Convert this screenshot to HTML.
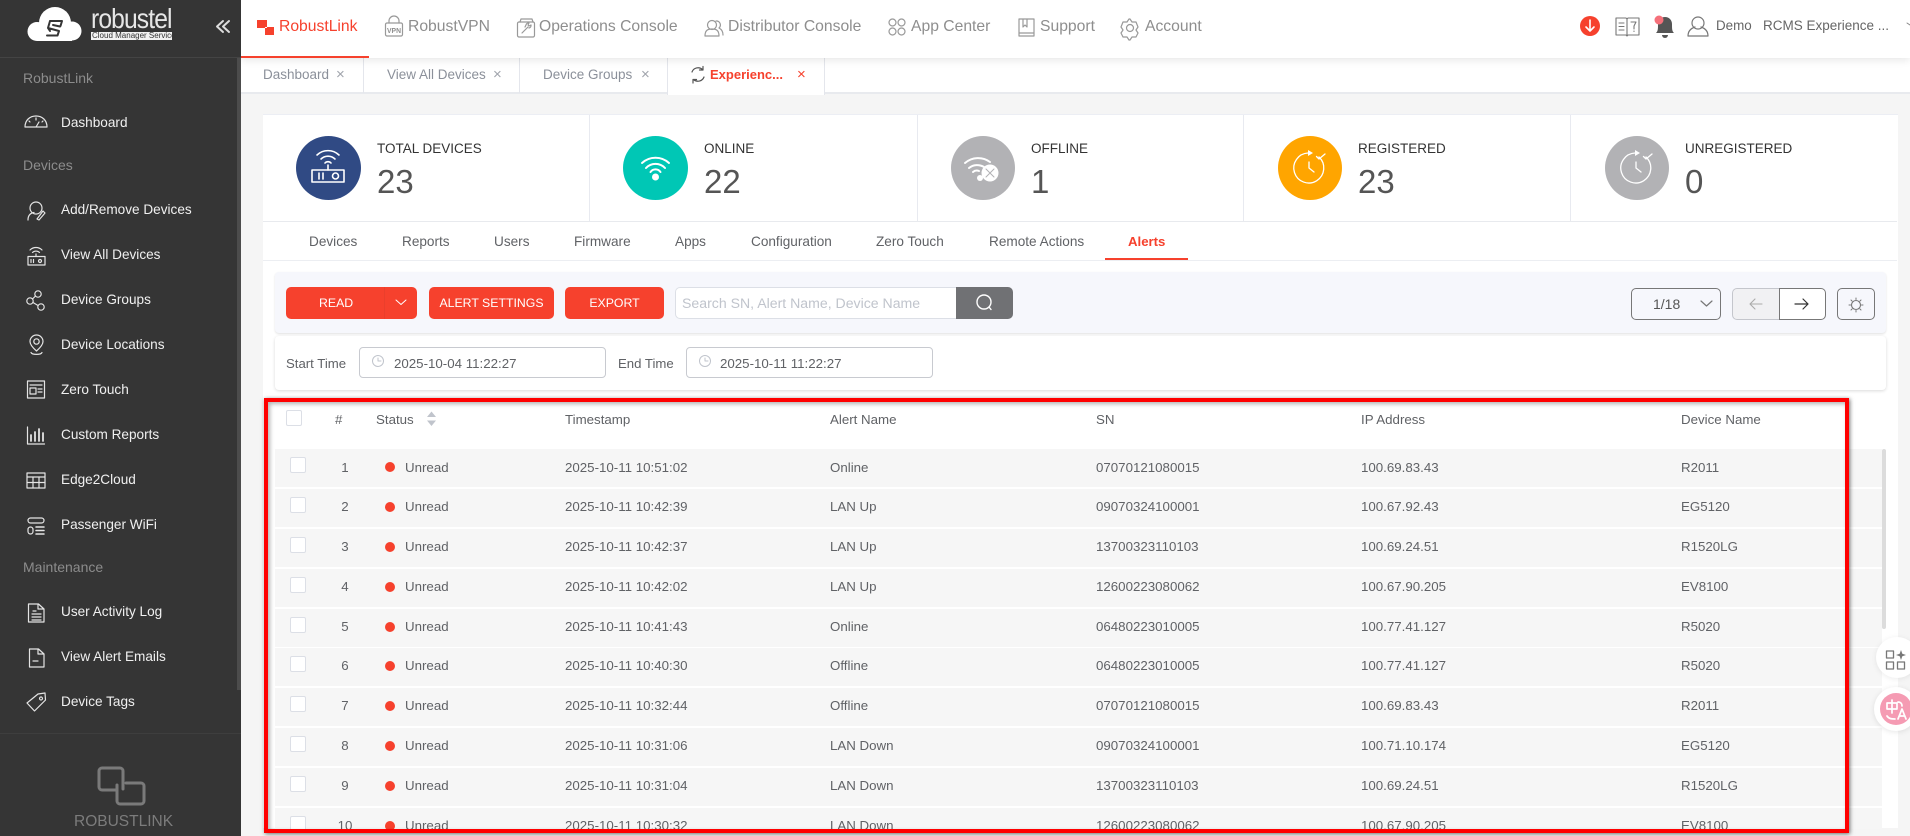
<!DOCTYPE html>
<html><head><meta charset="utf-8"><style>
html,body{margin:0;padding:0;width:1910px;height:836px;overflow:hidden;background:#f5f5f5;font-family:"Liberation Sans",sans-serif;color:#606266}
.t{position:absolute;white-space:nowrap;line-height:20px;height:20px}
.b{position:absolute;box-sizing:border-box}
.side{color:#f0f0f0;font-size:13.6px;left:61px;margin-top:1px}
.sec{color:#8c8c8c;font-size:14px;left:23px}
.nav{font-size:15.7px;color:#8e8e8e;top:17px}
.tab{font-size:13.5px;color:#8b909a;top:65px}
.x{font-size:15px;color:#a0a4ac;top:65px}
.lab{font-size:13.5px;color:#333;top:139px}
.num{font-size:33px;color:#555;top:172px;height:20px}
.sub{font-size:13.6px;color:#606266;top:232px}
.btn{position:absolute;background:#f6412d;color:#fff;font-size:12.3px;text-align:center;line-height:32px;height:32px;top:287px;border-radius:5px}
.th{font-size:13.3px;top:410px}
.tbl{position:absolute;left:0;top:402px;width:1910px;height:427px;overflow:hidden}
.r{position:absolute;left:275px;width:1607px;height:38px;background:#f6f6f6;font-size:13.3px}
.r i{position:absolute;left:15px;top:8px;width:14px;height:14px;border:1px solid #dcdfe6;background:#fff;border-radius:2px}
.r b{position:absolute;left:110px;top:13px;width:10px;height:10px;border-radius:50%;background:#f6412d}
.r span{position:absolute;top:8px;line-height:20px;white-space:nowrap}
.n{left:60px;width:20px;text-align:center}.u{left:130px}.s{left:290px}.a{left:555px}.c{left:821px}.p{left:1086px}.d{left:1406px}
</style></head><body>

<!-- main surfaces -->
<div class="b" style="left:241px;top:58px;width:1669px;height:36px;background:#fff;border-bottom:2px solid #e8eaee"></div>
<div class="b" style="left:667px;top:58px;width:158px;height:37px;background:#fff;border-left:1px solid #e4e6ec;border-right:1px solid #e4e6ec"></div>
<div class="b" style="left:363px;top:58px;width:1px;height:35px;background:#e4e6ec"></div>
<div class="b" style="left:519px;top:58px;width:1px;height:35px;background:#e4e6ec"></div>
<div class="b" style="left:263px;top:114px;width:1635px;height:714px;background:#fff;border-top:1px solid #eceef4"></div>
<div class="b" style="left:263px;top:221px;width:1634px;height:1px;background:#e8eaee"></div>
<div class="b" style="left:263px;top:260px;width:1634px;height:1px;background:#eceef2"></div>
<div class="b" style="left:589px;top:115px;width:1px;height:106px;background:#e8eaf0"></div>
<div class="b" style="left:917px;top:115px;width:1px;height:106px;background:#e8eaf0"></div>
<div class="b" style="left:1243px;top:115px;width:1px;height:106px;background:#e8eaf0"></div>
<div class="b" style="left:1570px;top:115px;width:1px;height:106px;background:#e8eaf0"></div>
<div class="b" style="left:1105px;top:258px;width:83px;height:2px;background:#f6412d"></div>

<!-- header -->
<div class="b" style="left:241px;top:0;width:1669px;height:58px;background:#fff;box-shadow:0 2px 8px rgba(0,0,0,.1)"></div>
<div class="b" style="left:241px;top:56px;width:128px;height:2px;background:#f6412d"></div>
<div class="t nav" style="left:279px;color:#f6412d">RobustLink</div>
<div class="t nav" style="left:408px">RobustVPN</div>
<div class="t nav" style="left:539px">Operations Console</div>
<div class="t nav" style="left:728px">Distributor Console</div>
<div class="t nav" style="left:911px">App Center</div>
<div class="t nav" style="left:1040px">Support</div>
<div class="t nav" style="left:1145px">Account</div>
<div class="t" style="left:1716px;top:16px;font-size:13.4px;color:#666">Demo</div>
<div class="t" style="left:1763px;top:16px;font-size:13.5px;color:#666">RCMS Experience ...</div>

<!-- tabs -->
<div class="t tab" style="left:263px">Dashboard</div><div class="t x" style="left:336px">×</div>
<div class="t tab" style="left:387px">View All Devices</div><div class="t x" style="left:493px">×</div>
<div class="t tab" style="left:543px">Device Groups</div><div class="t x" style="left:641px">×</div>
<div class="t tab" style="left:710px;color:#f6412d;font-weight:bold;font-size:13px">Experienc...</div><div class="t x" style="left:797px;color:#f6412d">×</div>

<!-- stats -->
<div class="b" style="left:296px;top:136px;width:65px;height:64px;border-radius:50%;background:#304a84"></div>
<div class="b" style="left:623px;top:136px;width:65px;height:64px;border-radius:50%;background:#00c7b5"></div>
<div class="b" style="left:951px;top:136px;width:64px;height:64px;border-radius:50%;background:#b2b2b5"></div>
<div class="b" style="left:1278px;top:136px;width:64px;height:64px;border-radius:50%;background:#ffa500"></div>
<div class="b" style="left:1605px;top:136px;width:64px;height:64px;border-radius:50%;background:#b2b2b5"></div>
<div class="t lab" style="left:377px">TOTAL DEVICES</div><div class="t num" style="left:377px">23</div>
<div class="t lab" style="left:704px">ONLINE</div><div class="t num" style="left:704px">22</div>
<div class="t lab" style="left:1031px">OFFLINE</div><div class="t num" style="left:1031px">1</div>
<div class="t lab" style="left:1358px">REGISTERED</div><div class="t num" style="left:1358px">23</div>
<div class="t lab" style="left:1685px">UNREGISTERED</div><div class="t num" style="left:1685px">0</div>

<!-- sub tabs -->
<div class="t sub" style="left:309px">Devices</div>
<div class="t sub" style="left:402px">Reports</div>
<div class="t sub" style="left:494px">Users</div>
<div class="t sub" style="left:574px">Firmware</div>
<div class="t sub" style="left:675px">Apps</div>
<div class="t sub" style="left:751px">Configuration</div>
<div class="t sub" style="left:876px">Zero Touch</div>
<div class="t sub" style="left:989px">Remote Actions</div>
<div class="t sub" style="left:1128px;color:#f6412d;font-weight:bold;font-size:13.2px">Alerts</div>

<!-- toolbar -->
<div class="b" style="left:275px;top:272px;width:1611px;height:61px;background:#f6f7fc;border-radius:4px;box-shadow:0 1px 2px rgba(0,0,0,.12)"></div>
<div class="btn" style="left:286px;width:131px;text-align:left;text-indent:33px">READ</div>
<div class="b" style="left:384px;top:287px;width:1px;height:32px;background:#ea3f2c"></div>
<div class="btn" style="left:429px;width:125px">ALERT SETTINGS</div>
<div class="btn" style="left:565px;width:99px">EXPORT</div>
<div class="b" style="left:675px;top:287px;width:282px;height:32px;background:#fff;border:1px solid #dcdfe6;border-right:0;border-radius:5px 0 0 5px"></div>
<div class="t" style="left:682px;top:293px;font-size:14.1px;color:#c0c4cc">Search SN, Alert Name, Device Name</div>
<div class="b" style="left:956px;top:287px;width:57px;height:32px;background:#707174;border-radius:0 5px 5px 0"></div>
<div class="b" style="left:1631px;top:288px;width:90px;height:32px;border:1px solid #777;border-radius:5px"></div>
<div class="t" style="left:1653px;top:294px;font-size:14px;color:#555">1/18</div>
<div class="b" style="left:1732px;top:288px;width:48px;height:32px;background:#f1f1f3;border:1px solid #c4c6cc;border-radius:5px 0 0 5px"></div>
<div class="b" style="left:1779px;top:288px;width:47px;height:32px;background:#fff;border:1px solid #777;border-radius:0 5px 5px 0"></div>
<div class="b" style="left:1837px;top:288px;width:38px;height:32px;border:1px solid #777;border-radius:5px"></div>

<!-- date -->
<div class="b" style="left:275px;top:336px;width:1611px;height:54px;background:#fff;border-radius:4px;box-shadow:0 1px 3px rgba(0,0,0,.15)"></div>
<div class="t" style="left:286px;top:354px;font-size:13.2px">Start Time</div>
<div class="b" style="left:359px;top:347px;width:247px;height:31px;background:#fff;border:1px solid #c8cad0;border-radius:4px"></div>
<div class="t" style="left:394px;top:354px;font-size:13.3px">2025-10-04 11:22:27</div>
<div class="t" style="left:618px;top:354px;font-size:13.2px">End Time</div>
<div class="b" style="left:686px;top:347px;width:247px;height:31px;background:#fff;border:1px solid #c8cad0;border-radius:4px"></div>
<div class="t" style="left:720px;top:354px;font-size:13.3px">2025-10-11 11:22:27</div>

<!-- table head -->
<div class="b" style="left:286px;top:410px;width:16px;height:16px;border:1px solid #dcdfe6;border-radius:2px;background:#fff"></div>
<div class="t th" style="left:335px">#</div>
<div class="t th" style="left:376px">Status</div>
<div class="t th" style="left:565px">Timestamp</div>
<div class="t th" style="left:830px">Alert Name</div>
<div class="t th" style="left:1096px">SN</div>
<div class="t th" style="left:1361px">IP Address</div>
<div class="t th" style="left:1681px">Device Name</div>

<!-- table rows -->
<div class="tbl">
<div class="r" style="top:47px"><i></i><span class="n" style="top:9px">1</span><b></b><span class="u" style="top:9px">Unread</span><span class="s" style="top:9px">2025-10-11 10:51:02</span><span class="a" style="top:9px">Online</span><span class="c" style="top:9px">07070121080015</span><span class="p" style="top:9px">100.69.83.43</span><span class="d" style="top:9px">R2011</span></div>
<div class="r" style="top:87px"><i></i><span class="n">2</span><b></b><span class="u">Unread</span><span class="s">2025-10-11 10:42:39</span><span class="a">LAN Up</span><span class="c">09070324100001</span><span class="p">100.67.92.43</span><span class="d">EG5120</span></div>
<div class="r" style="top:127px"><i></i><span class="n">3</span><b></b><span class="u">Unread</span><span class="s">2025-10-11 10:42:37</span><span class="a">LAN Up</span><span class="c">13700323110103</span><span class="p">100.69.24.51</span><span class="d">R1520LG</span></div>
<div class="r" style="top:167px"><i></i><span class="n">4</span><b></b><span class="u">Unread</span><span class="s">2025-10-11 10:42:02</span><span class="a">LAN Up</span><span class="c">12600223080062</span><span class="p">100.67.90.205</span><span class="d">EV8100</span></div>
<div class="r" style="top:207px"><i></i><span class="n">5</span><b></b><span class="u">Unread</span><span class="s">2025-10-11 10:41:43</span><span class="a">Online</span><span class="c">06480223010005</span><span class="p">100.77.41.127</span><span class="d">R5020</span></div>
<div class="r" style="top:246px"><i></i><span class="n">6</span><b></b><span class="u">Unread</span><span class="s">2025-10-11 10:40:30</span><span class="a">Offline</span><span class="c">06480223010005</span><span class="p">100.77.41.127</span><span class="d">R5020</span></div>
<div class="r" style="top:286px"><i></i><span class="n">7</span><b></b><span class="u">Unread</span><span class="s">2025-10-11 10:32:44</span><span class="a">Offline</span><span class="c">07070121080015</span><span class="p">100.69.83.43</span><span class="d">R2011</span></div>
<div class="r" style="top:326px"><i></i><span class="n">8</span><b></b><span class="u">Unread</span><span class="s">2025-10-11 10:31:06</span><span class="a">LAN Down</span><span class="c">09070324100001</span><span class="p">100.71.10.174</span><span class="d">EG5120</span></div>
<div class="r" style="top:366px"><i></i><span class="n">9</span><b></b><span class="u">Unread</span><span class="s">2025-10-11 10:31:04</span><span class="a">LAN Down</span><span class="c">13700323110103</span><span class="p">100.69.24.51</span><span class="d">R1520LG</span></div>
<div class="r" style="top:406px"><i></i><span class="n">10</span><b></b><span class="u">Unread</span><span class="s">2025-10-11 10:30:32</span><span class="a">LAN Down</span><span class="c">12600223080062</span><span class="p">100.67.90.205</span><span class="d">EV8100</span></div>
</div>
<div class="b" style="left:1882px;top:449px;width:4px;height:180px;background:#dcdcdc;border-radius:2px"></div>

<!-- annotation rectangle -->
<div class="b" style="left:264px;top:398px;width:1585px;height:435px;border:4px solid #f00;box-shadow:1px 1px 4px rgba(0,0,0,.55),inset 2px 2px 4px rgba(0,0,0,.3)"></div>

<!-- floating -->
<div class="b" style="left:1876px;top:637px;width:42px;height:41px;border-radius:50%;background:#fff;box-shadow:0 1px 6px rgba(0,0,0,.08)"></div>
<div class="b" style="left:1874px;top:687px;width:44px;height:44px;border-radius:50%;background:#fff;box-shadow:0 1px 6px rgba(0,0,0,.1)"></div>
<div class="b" style="left:1880px;top:693px;width:32px;height:32px;border-radius:50%;background:#f59bb3"></div>

<!-- sidebar -->
<div class="b" style="left:0;top:0;width:241px;height:836px;background:#353535"></div>
<div class="b" style="left:0;top:57px;width:241px;height:1px;background:#444"></div>
<div class="b" style="left:237px;top:58px;width:4px;height:632px;background:#4c4c4c"></div>
<div class="b" style="left:0;top:733px;width:241px;height:1px;background:#3e3e3e"></div>
<div class="t" style="left:91px;top:4px;font-size:28px;height:30px;line-height:30px;color:#e6e6e6;letter-spacing:-1px;transform:scaleX(.88);transform-origin:0 0">robustel</div>
<div class="b" style="left:91px;top:32px;width:81px;height:8px;background:#f2f2f2"></div>
<div class="t" style="left:92px;top:31px;height:10px;line-height:10px;font-size:8px;color:#333">Cloud Manager Service</div>
<div class="t sec" style="top:68px">RobustLink</div>
<div class="t side" style="top:112px">Dashboard</div>
<div class="t sec" style="top:155px">Devices</div>
<div class="t side" style="top:199px">Add/Remove Devices</div>
<div class="t side" style="top:244px">View All Devices</div>
<div class="t side" style="top:289px">Device Groups</div>
<div class="t side" style="top:334px">Device Locations</div>
<div class="t side" style="top:379px">Zero Touch</div>
<div class="t side" style="top:424px">Custom Reports</div>
<div class="t side" style="top:469px">Edge2Cloud</div>
<div class="t side" style="top:514px">Passenger WiFi</div>
<div class="t sec" style="top:557px">Maintenance</div>
<div class="t side" style="top:601px">User Activity Log</div>
<div class="t side" style="top:646px">View Alert Emails</div>
<div class="t side" style="top:691px">Device Tags</div>
<div class="t" style="left:74px;top:812px;font-size:15.5px;color:#7c7c7c">ROBUSTLINK</div>

<!-- icon layer -->
<svg width="1910" height="836" viewBox="0 0 1910 836" style="position:absolute;left:0;top:0;pointer-events:none" fill="none" stroke-linecap="round" stroke-linejoin="round">
<!-- logo -->
<g fill="#fff"><circle cx="37" cy="31.500" r="9.500"/><circle cx="72" cy="31" r="9.500"/><circle cx="55" cy="23" r="16"/><rect x="37" y="28" width="35" height="13"/></g>
<path d="M50 21h12l-1.500 5M50 21l-2 7 11 3-1.500 4.500H47M53 25l7 1.500M48 28l2 3" stroke="#353535" stroke-width="2"/>
<path d="M229 21l-6 5.500 6 5.500M223 21l-6 5.500 6 5.500" stroke="#ddd" stroke-width="2"/>

<!-- sidebar icons -->
<g stroke="#e4e4e4" stroke-width="1.2">
<path d="M25 127c0-7 5-11 11-11s11 4 11 11zM36 127l3-5M29 121l1 1M36 118v2M43 121l-1 1"/>
<circle cx="36" cy="208" r="6"/><path d="M28 220c0-5 3-7 6-7.500M37 219l6-8 2 2-6 7z"/>
<path d="M30 250a8.500 8.500 0 0 1 12 0M32.500 252.500a5 5 0 0 1 7 0M36 254v2"/><rect x="28" y="256.500" width="17" height="8.500"/><path d="M31 259.500v3M33.500 259.500v3"/><circle cx="40" cy="261" r="1.500"/>
<circle cx="30" cy="301" r="3.200"/><circle cx="38" cy="294" r="3.200"/><circle cx="41" cy="307" r="3.200"/><path d="M32.500 299l3-3M33 302.500l5 3"/>
<path d="M36.500 351c-4-3.500-6.500-7-6.500-9.500a6.500 6.500 0 0 1 13 0c0 2.500-2.500 6-6.500 9.500z"/><circle cx="36.500" cy="341.500" r="2.700"/><path d="M31 352.500c1 2.500 10 2.500 11 0"/>
<rect x="27.500" y="381" width="17" height="17"/><path d="M30 385h12M30 388h6v6h-6zM38 389h4M38 392h4"/>
<path d="M27.500 427v17h17"/><path d="M31 441v-6M35 441v-9M39 441v-12M43 441v-8" stroke-width="1.800"/>
<rect x="27" y="473" width="18" height="15"/><path d="M27 477h18M27 482.500h18M33 477v11M39 477v11"/>
<rect x="28" y="518" width="16" height="5" rx="2.500"/><rect x="28" y="527" width="5" height="7" rx="2.500"/><path d="M36 527h8M36 530.500h8M36 534h8" stroke-width="1.500"/>
<path d="M28.500 604h10l5.500 5v13h-15.500z M38 604v5h6M32 614h9M32 617h9M32 620h9M33 611h3"/>
<path d="M29.500 649h9l5.500 5v13h-14.500zM38 649v5h6M33 661h5"/>
<path d="M27 703l11-9 7-1 .5 7-11 11zM41 697a1.500 1.500 0 1 0 .01 0"/>
</g>
<path d="M123 789V771a3 3 0 0 0-3-3H102a3 3 0 0 0-3 3v16a3 3 0 0 0 3 3h14M126 783h15a3 3 0 0 1 3 3v15a3 3 0 0 1-3 3H120a3 3 0 0 1-3-3V785" stroke="#7a7a7a" stroke-width="3"/>

<!-- top nav icons -->
<rect x="257" y="20" width="10" height="8" fill="#f6412d"/><rect x="265" y="27" width="9" height="8" fill="#f6412d"/><rect x="265" y="27" width="2" height="1" fill="#fff"/>
<g stroke="#999" stroke-width="1.200">
<rect x="385.500" y="23" width="17" height="13" rx="1.500"/><path d="M389 23v-2a5 5 0 0 1 10 0v2"/>
<rect x="517.500" y="22" width="17" height="15" rx="1.500"/><path d="M520 22l1-3h11l1 3M522 33l6-6M529 28a2.500 2.500 0 0 0 2-3l-2 1-1-1 1-2a2.500 2.500 0 0 0-3 2l-1 2"/>
<circle cx="712" cy="25" r="4.500"/><path d="M705 36c0-6 3-7 7-7s7 1 7 7zM716 21a4 4 0 0 1 3 7c2 1 4 3 4 7"/>
<rect x="889" y="19" width="7" height="7" rx="3.500"/><rect x="898" y="19" width="7" height="7" rx="3.500"/><rect x="889" y="28" width="7" height="7" rx="3.500"/><rect x="898" y="28" width="7" height="7" rx="3.500"/>
<path d="M1019 19h15v17h-15zM1019 33h15M1023 19v8l2-2 2 2v-8"/>
<path d="M1130 19l2 3h4l2 5-2 3 2 3-2 4h-4l-2 3h-1l-2-3h-4l-2-4 2-3-2-3 2-5h4l2-3z"/><circle cx="1130" cy="28" r="3.500"/>
</g>
<text x="387" y="33" font-family="'Liberation Sans',sans-serif" font-size="7.500" font-weight="bold" fill="#8e8e8e" textLength="14" lengthAdjust="spacingAndGlyphs">VPN</text>

<!-- top right icons -->
<circle cx="1590" cy="26" r="10" fill="#f6412d"/><path d="M1590 20v11M1586 27l4 4 4-4" stroke="#fff" stroke-width="1.600"/>
<path d="M1616 18h10l1 1 1-1h11v17h-11l-1 1-1-1h-10zM1627 19v16M1619 23h5M1619 26.500h5M1619 30h5M1631 22h5l-2 4v3M1634 31v.5" stroke="#777" stroke-width="1.100"/>
<path d="M1656 33c2-2 2-4 2-9 0-4 3-7 7-7s7 3 7 7c0 5 0 7 2 9z" fill="#555"/><path d="M1662 35h6a3 3 0 0 1-6 0z" fill="#555"/><circle cx="1659" cy="20" r="4.500" fill="#f5707a"/>
<circle cx="1698" cy="23" r="6" stroke="#777" stroke-width="1.200"/><path d="M1688 36c0-6 4-8 7-9M1708 36c0-6-4-8-7-9M1688 36h20" stroke="#777" stroke-width="1.200"/>
<path d="M1907 23l3 2" stroke="#888"/>

<!-- tab spinner -->
<path d="M692 72a6.500 6.500 0 0 1 10.500-2.500M704 77a6.500 6.500 0 0 1-10.500 2.500M703 66.500v3.500h-3.500M693 83v-3.500h3.500" stroke="#555" stroke-width="1.200"/>

<!-- stat icons -->
<g stroke="#fff" stroke-width="1.600">
<path d="M317 155a16 16 0 0 1 22 0M321 159a10 10 0 0 1 14 0M325 163a4 4 0 0 1 6 0M328 165v5"/><rect x="312" y="170" width="32" height="12"/><path d="M319 173v6M323 173v6"/><circle cx="335.500" cy="176" r="3"/>
<path d="M642 163a20 20 0 0 1 27 0M646 168a13 13 0 0 1 19 0M650.500 172a6 6 0 0 1 10 0" stroke-width="2"/><circle cx="655.500" cy="177" r="3.500" fill="#fff" stroke="none"/>
<path d="M965 163a20 20 0 0 1 25-1M969 168a13 13 0 0 1 15-1M973 172a6 6 0 0 1 6-1" stroke-width="2"/><circle cx="980" cy="178" r="3" fill="#fff" stroke="none"/><circle cx="990" cy="173" r="8.500" fill="#fff" stroke="none"/><path d="M986 169l8 8M994 169l-8 8" stroke="#b2b2b5" stroke-width="1"/>
<g stroke-width="1.300"><path d="M1319 157a15 15 0 1 1-11-4M1309 162v6l5 4M1316.500 156.500l2.500 2.500 6-5"/><path d="M1308 150l5 3-5 3z" fill="#fff" stroke="none"/></g>
<g transform="translate(327 0)" stroke-width="1.300"><path d="M1319 157a15 15 0 1 1-11-4M1309 162v6l5 4M1316.500 156.500l2.500 2.500 6-5"/><path d="M1308 150l5 3-5 3z" fill="#fff" stroke="none"/></g>
</g>

<!-- toolbar icons -->
<path d="M396 300l5 4.500 5-4.500" stroke="#fff" stroke-width="1"/>
<circle cx="984" cy="302" r="7" stroke="#fff" stroke-width="1.400"/><path d="M989 307l2 2.500" stroke="#fff" stroke-width="1.400"/>
<path d="M1701 301l5.500 5 5.500-5" stroke="#777" stroke-width="1.200"/>
<path d="M1762 304h-12M1755 299l-5 5 5 5" stroke="#aaa" stroke-width="1.100"/>
<path d="M1795 304h13M1803 299l5 5-5 5" stroke="#333" stroke-width="1.200"/>
<circle cx="1856" cy="305" r="4.500" stroke="#777" stroke-width="1.100"/><path d="M1856 298v1.500M1856 310.500v1.500M1849 305h1.500M1861.500 305h1.500M1851 300l1 1M1860 309l1 1M1861 300l-1 1M1851 310l1-1" stroke="#777"/>

<!-- date clocks -->
<circle cx="378" cy="361" r="5.500" stroke="#c0c4cc"/><path d="M378 358v3h3" stroke="#c0c4cc"/>
<circle cx="705" cy="361" r="5.500" stroke="#c0c4cc"/><path d="M705 358v3h3" stroke="#c0c4cc"/>

<!-- sort -->
<path d="M427 417l4.500-5.500 4.500 5.500z" fill="#c0c4cc"/><path d="M427 420.500l4.500 5.500 4.500-5.500z" fill="#c0c4cc"/>

<!-- floating icons -->
<rect x="1886.500" y="651" width="7" height="7" stroke="#777" stroke-width="1.300"/><rect x="1886.500" y="662" width="7" height="7" stroke="#777" stroke-width="1.300"/><rect x="1897.500" y="662" width="7" height="7" stroke="#777" stroke-width="1.300"/>
<path d="M1901 650l1.300 3.700 3.700 1.300-3.700 1.300-1.300 3.700-1.300-3.700-3.700-1.300 3.700-1.300z" fill="#777"/>
<path d="M1887 703h10v6h-10zM1892 700v13M1887 716c2 3 5 3 8 3M1898 702c2 0 4 1 4 4M1898 719l4-10 4 10M1900 716h4" stroke="#fff" stroke-width="1.700"/>
</svg>
</body></html>
